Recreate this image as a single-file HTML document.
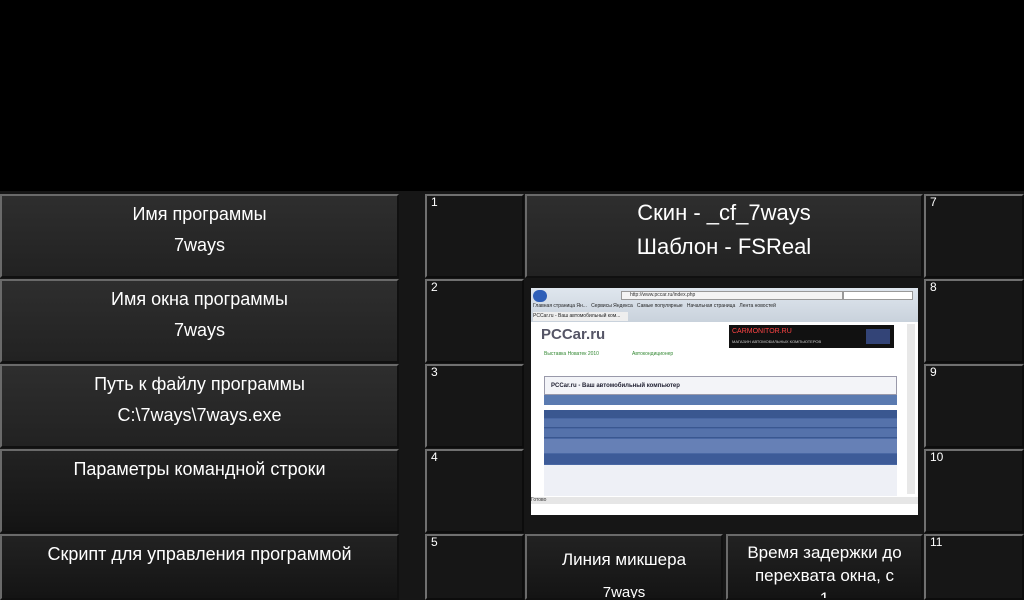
<!DOCTYPE html>
<html style="width:1024px;height:600px;overflow:hidden"><head><meta charset="utf-8"><style>
*{margin:0;padding:0;box-sizing:border-box}
body{width:1024px;height:600px;background:#000;position:relative;overflow:hidden;font-family:"Liberation Sans",Arial,sans-serif;color:#fff}
.a{position:absolute}
.bg{left:0;top:191px;width:1024px;height:409px;background:#161616}
.btn{position:absolute;overflow:hidden;background:linear-gradient(#2e2e2e,#222);border:2px solid;border-color:#6a6a6a #101010 #101010 #6a6a6a;text-align:center;font-size:18px;line-height:31px;padding-top:3px}
.num{position:absolute;overflow:hidden;background:#161616;border:2px solid;border-color:#707070 #0c0c0c #0c0c0c #707070;font-size:12px;padding:0 0 0 4px;line-height:13px}
.dk{background:linear-gradient(#222,#141414)}
</style></head><body>
<div class="a bg"></div>
<div class="btn" style="left:0;top:194px;width:399px;height:84px">Имя программы<br>7ways</div>
<div class="btn" style="left:0;top:279px;width:399px;height:84px">Имя окна программы<br>7ways</div>
<div class="btn" style="left:0;top:364px;width:399px;height:84px">Путь к файлу программы<br>C:\7ways\7ways.exe</div>
<div class="btn dk" style="left:0;top:449px;width:399px;height:84px">Параметры командной строки</div>
<div class="btn dk" style="left:0;top:534px;width:399px;height:66px;padding-top:3px">Скрипт для управления программой</div>

<div class="num" style="left:425px;top:194px;width:99px;height:84px">1</div>
<div class="num" style="left:425px;top:279px;width:99px;height:84px">2</div>
<div class="num" style="left:425px;top:364px;width:99px;height:84px">3</div>
<div class="num" style="left:425px;top:449px;width:99px;height:84px">4</div>
<div class="num" style="left:425px;top:534px;width:99px;height:66px">5</div>

<div class="btn" style="left:525px;top:194px;width:398px;height:84px;font-size:22px;line-height:34px;padding-top:0px">Скин - _cf_7ways<br>Шаблон - FSReal</div>

<div class="a" style="left:531px;top:288px;width:387px;height:227px;background:#fff">
 <div class="a" style="left:0;top:0;width:387px;height:34px;background:linear-gradient(#dfe6ee,#c9d2dc)"></div>
 <div class="a" style="left:2px;top:2px;width:14px;height:12px;border-radius:7px;background:#2f5fb8"></div>
 <div class="a" style="left:90px;top:3px;width:222px;height:9px;background:#f4f4f4;border:1px solid #999;font-size:5px;color:#333;line-height:7px;padding-left:8px">http://www.pccar.ru/index.php</div>
 <div class="a" style="left:312px;top:3px;width:70px;height:9px;background:#fff;border:1px solid #999"></div>
 <div class="a" style="left:2px;top:14px;width:300px;height:8px;font-size:5px;color:#222;line-height:8px">Главная страница Ян... &nbsp; Сервисы Яндекса &nbsp; Самые популярные &nbsp; Начальная страница &nbsp; Лента новостей</div>
 <div class="a" style="left:2px;top:24px;width:95px;height:9px;background:#eee;font-size:5px;color:#222;line-height:9px">PCCar.ru - Ваш автомобильный ком...</div>
 <div class="a" style="left:0;top:34px;width:377px;height:175px;background:#fff"></div>
 <div class="a" style="left:10px;top:38px;width:80px;height:22px;font-size:15px;color:#556;font-weight:bold">PCCar.ru</div>
 <div class="a" style="left:198px;top:37px;width:165px;height:23px;background:#111"><span style="font-size:7px;color:#f44;position:absolute;left:3px;top:3px">CARMONITOR.RU</span><span style="font-size:4px;color:#ccc;position:absolute;left:3px;top:14px">МАГАЗИН АВТОМОБИЛЬНЫХ КОМПЬЮТЕРОВ</span><div style="position:absolute;right:4px;top:4px;width:24px;height:15px;background:#347"></div></div>
 <div class="a" style="left:376px;top:36px;width:8px;height:170px;background:#e8e8e8"></div>
 <div class="a" style="left:13px;top:63px;width:60px;height:20px;font-size:5px;color:#383">Выставка Новатек 2010</div>
 <div class="a" style="left:101px;top:63px;width:60px;height:20px;font-size:5px;color:#383">Автокондиционер</div>
 <div class="a" style="left:13px;top:88px;width:353px;height:19px;background:#f3f4f8;border:1px solid #99a;font-size:6px;color:#223;font-weight:bold;padding:6px 0 0 6px">PCCar.ru - Ваш автомобильный компьютер</div>
 <div class="a" style="left:13px;top:107px;width:353px;height:10px;background:#5a7ab0"></div>
 <div class="a" style="left:13px;top:122px;width:353px;height:86px;background:#4a68a4"></div>
 <div class="a" style="left:13px;top:122px;width:353px;height:8px;background:#3a5790"></div>
 <div class="a" style="left:13px;top:131px;width:353px;height:9px;background:#5572ab;border-bottom:1px solid #3a5790"></div>
 <div class="a" style="left:13px;top:141px;width:353px;height:9px;background:#5572ab;border-bottom:1px solid #3a5790"></div>
 <div class="a" style="left:13px;top:151px;width:353px;height:14px;background:#6680b6"></div>
 <div class="a" style="left:13px;top:166px;width:353px;height:10px;background:#3d5b98"></div>
 <div class="a" style="left:13px;top:177px;width:353px;height:31px;background:#eef0f6"></div>
 <div class="a" style="left:0;top:209px;width:387px;height:7px;background:#e6e6e6;font-size:5px;color:#333;line-height:7px">Готово</div>
</div>

<div class="num" style="left:924px;top:194px;width:100px;height:84px">7</div>
<div class="num" style="left:924px;top:279px;width:100px;height:84px">8</div>
<div class="num" style="left:924px;top:364px;width:100px;height:84px">9</div>
<div class="num" style="left:924px;top:449px;width:100px;height:84px">10</div>
<div class="num" style="left:924px;top:534px;width:100px;height:66px">11</div>

<div class="btn dk" style="left:525px;top:534px;width:198px;height:66px;font-size:17px;line-height:32px;padding-top:8px">Линия микшера<br><span style="font-size:15px">7ways</span></div>
<div class="btn dk" style="left:726px;top:534px;width:197px;height:66px;font-size:17px;line-height:23px;padding-top:5px">Время задержки до перехвата окна, с<br>1</div>
</body></html>
